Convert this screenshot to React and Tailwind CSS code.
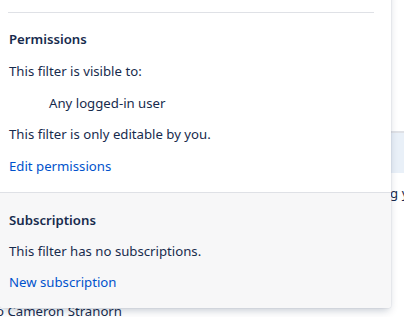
import React from 'react';

// Filter details popover, cropped from a larger page
export default function App() {
  return (
    <div
      className="relative w-[404px] h-[317px] overflow-hidden bg-white text-[13.2px] leading-5 text-[#172b4d]"
      style={{ fontFamily: '"Segoe UI", "Noto Sans", sans-serif' }}
    >
      {/* Page content behind the popover */}
      <div className="flex flex-col">
        <div className="h-[131px]" />
        <div className="h-[42px] border-t-2 border-[#dfe1e6] bg-[#e9f0f8]" />
        <div className="flex h-[40px] items-center pl-[346px] whitespace-nowrap">showing you</div>
        <div className="h-[88px]" />
        <div className="flex h-[20px] items-center whitespace-nowrap">
          <span className="-ml-[4px]">o Cameron Stranorn</span>
        </div>
      </div>

      {/* Popover */}
      <div className="absolute left-0 bottom-[9px] w-[391px] rounded-b-[3px] bg-white shadow-[0_4px_8px_-2px_rgba(9,30,66,0.25),0_0_1px_rgba(9,30,66,0.31)]">
        <div className="pt-[500px]" />
        <div className="ml-2 mr-[17px] border-t border-[#dfe1e6]" />

        <section className="flex flex-col gap-[11.75px] px-[9px] pt-4 pb-4">
          <h3 className="font-semibold">Permissions</h3>
          <p>This filter is visible to:</p>
          <p className="pl-10">Any logged-in user</p>
          <p>This filter is only editable by you.</p>
          <a href="#" className="text-[#0052cc]">Edit permissions</a>
        </section>

        <section className="flex flex-col gap-[11px] border-t border-[#dfe1e6] bg-[#f7f7f8] px-[9px] pt-[17px] pb-4 rounded-b-[3px]">
          <h3 className="font-semibold">Subscriptions</h3>
          <p>This filter has no subscriptions.</p>
          <a href="#" className="text-[#0052cc]">New subscription</a>
        </section>
      </div>
    </div>
  );
}
